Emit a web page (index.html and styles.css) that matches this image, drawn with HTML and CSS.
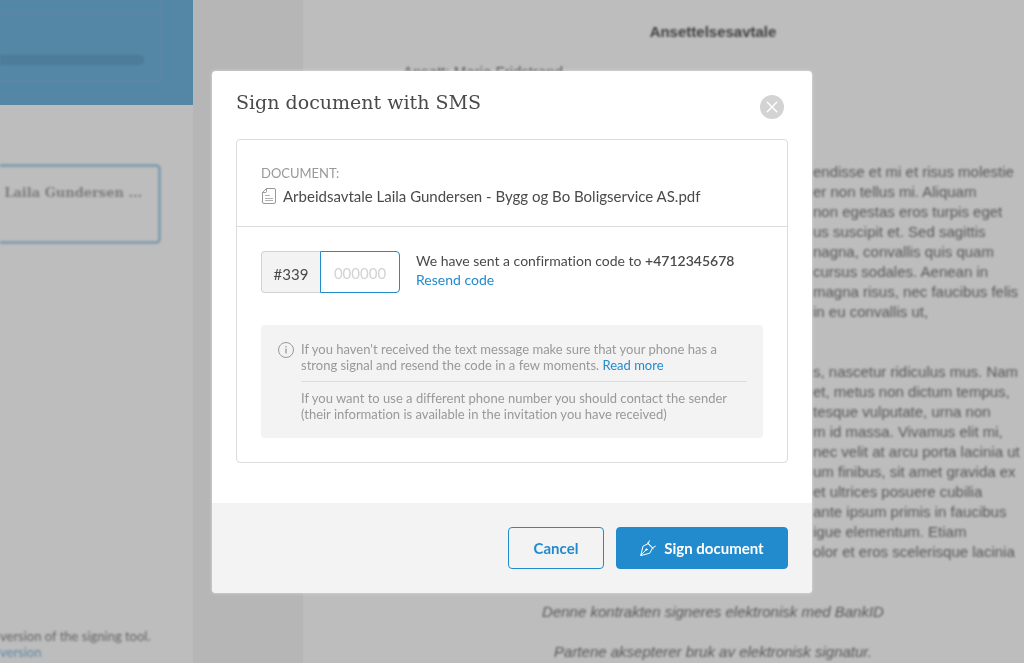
FILE: index.html
```html
<!DOCTYPE html>
<html lang="en">
<head>
    <meta charset="UTF-8">
    <meta name="viewport" content="width=device-width, initial-scale=1.0">
    <title>Sign document with SMS</title>
    <link rel="stylesheet" href="styles.css">
</head>
<body>

    <div class="page" aria-hidden="true">
        <aside class="sidebar">
            <div class="sidebar-top">
                <div class="step"></div>
                <div class="step step-current">
                    <div class="progress"></div>
                </div>
            </div>
            <div class="file-card">- Laila Gundersen ...</div>
            <div class="sidebar-footer">
                <div>version of the signing tool.</div>
                <a href="#" tabindex="-1">version</a>
            </div>
        </aside>

        <main class="document">
            <h2>Ansettelsesavtale</h2>
            <p class="party">Ansatt: Marie Fridstrand</p>
            <p class="copy copy-first">
                <span>endisse et mi et risus molestie</span>
                <span>er non tellus mi. Aliquam</span>
                <span>non egestas eros turpis eget</span>
                <span>us suscipit et. Sed sagittis</span>
                <span>nagna, convallis quis quam</span>
                <span>cursus sodales. Aenean in</span>
                <span>magna risus, nec faucibus felis</span>
                <span>in eu convallis ut,</span>
            </p>
            <p class="copy">
                <span>s, nascetur ridiculus mus. Nam</span>
                <span>et, metus non dictum tempus,</span>
                <span>tesque vulputate, urna non</span>
                <span>m id massa. Vivamus elit mi,</span>
                <span>nec velit at arcu porta lacinia ut</span>
                <span>um finibus, sit amet gravida ex</span>
                <span>et ultrices posuere cubilia</span>
                <span>ante ipsum primis in faucibus</span>
                <span>igue elementum. Etiam</span>
                <span>olor et eros scelerisque lacinia</span>
            </p>
            <p class="note">Denne kontrakten signeres elektronisk med BankID</p>
            <p class="note">Partene aksepterer bruk av elektronisk signatur.</p>
        </main>
    </div>

    <div class="overlay">
        <form class="modal" role="dialog" aria-labelledby="modal-title">
            <header class="modal-header">
                <h1 id="modal-title">Sign document with SMS</h1>
                <button type="button" class="close-button" aria-label="Close">
                    <svg width="24" height="24" viewBox="0 0 24 24" fill="none" stroke="#fff" stroke-width="1.5" stroke-linecap="round">
                        <path d="M7.3 7.3l9.4 9.4M16.7 7.3l-9.4 9.4"/>
                    </svg>
                </button>
            </header>

            <div class="panel">
                <section class="panel-section">
                    <div class="label">DOCUMENT:</div>
                    <div class="file-name">
                        <svg width="16" height="18" viewBox="0 0 16 18" fill="none" stroke="#999">
                            <path d="M5.5 1.5H13a1.5 1.5 0 0 1 1.5 1.5v12a1.5 1.5 0 0 1-1.5 1.5H3A1.5 1.5 0 0 1 1.5 15V5.5z"/>
                            <path d="M5.5 1.5v3a1 1 0 0 1-1 1h-3"/>
                            <path d="M4 8.5h5M4 11.5h8M4 13.5h8" stroke="#b0b0b0"/>
                        </svg>
                        <span>Arbeidsavtale Laila Gundersen - Bygg og Bo Boligservice AS.pdf</span>
                    </div>
                </section>

                <section class="panel-section">
                    <div class="code-row">
                        <div class="code-field">
                            <label for="code">#339</label>
                            <input type="text" id="code" placeholder="000000" maxlength="6" inputmode="numeric">
                        </div>
                        <div class="code-text">
                            We have sent a confirmation code to <strong>+4712345678</strong><br>
                            <a href="#">Resend code</a>
                        </div>
                    </div>

                    <div class="info">
                        <svg width="18" height="18" viewBox="0 0 18 18" fill="none" stroke="#999">
                            <circle cx="9" cy="9" r="7.5"/>
                            <path d="M9 7.5v5M9 5v1.3" stroke-width="1.3"/>
                        </svg>
                        <div class="info-text">
                            <p>If you haven't received the text message make sure that your phone has a<br>
                            strong signal and resend the code in a few moments. <a href="#">Read more</a></p>
                            <p>If you want to use a different phone number you should contact the sender<br>
                            (their information is available in the invitation you have received)</p>
                        </div>
                    </div>
                </section>
            </div>

            <footer class="modal-footer">
                <button type="button" class="button">Cancel</button>
                <button type="submit" class="button button-primary">
                    <svg width="16" height="16" viewBox="0 0 16 16" fill="none" stroke="#fff" stroke-linecap="round" stroke-linejoin="round">
                        <path d="M.8 15.2L3 6.2l5.2-2.6 4.4 4.2-2.7 5.1z"/>
                        <path d="M.8 15.2l5.3-5.4M8.2 3.6L9.3.8M12.6 7.8l2.8-1.6M7.4 2.9l5.9 5.7"/>
                        <circle cx="6.4" cy="9.5" r=".7"/>
                    </svg>
                    <span>Sign document</span>
                </button>
            </footer>
        </form>
    </div>

</body>
</html>
```
FILE: styles.css
```css
:root {
    --accent-color: #228bcd;
    --text-color: #4a4a4a;
    --muted-color: #999;
    --border-color: #dcdcdc;
    --soft-color: #f3f3f3;
}

* {
    box-sizing: border-box;
}

body {
    margin: 0;
    color: var(--text-color);
    font-family: Lato, sans-serif;
    font-size: 14px;
    font-variant-ligatures: none;
    overflow: hidden;
}

h1, h2, p {
    margin: 0;
}

a {
    color: var(--accent-color);
    text-decoration: none;
}

/* page behind the dialog */
.page {
    display: flex;
    height: 100vh;
    overflow: hidden;
    background-color: #f6f6f6;
}

.sidebar {
    display: flex;
    flex-direction: column;
    flex: 0 0 193px;
    min-width: 0;
    background-color: #fff;
}

.file-card,
.sidebar-footer,
.progress,
.document > * {
    filter: blur(1px);
}

.sidebar-top {
    height: 105px;
    padding-right: 32px;
    background-color: #72b6e0;
}

.step {
    height: 14px;
    border-right: 1px solid #7bb6df;
}

.step-current {
    height: 67px;
    padding: 40px 16px 0 0;
    border-top: 1px solid #7bb6df;
    border-bottom: 1px solid #7bb6df;
}

.progress {
    height: 10px;
    border-radius: 0 4px 4px 0;
    background-color: #69a7d0;
}

.file-card {
    display: flex;
    justify-content: flex-end;
    height: 80px;
    margin: 59px 32px 0 0;
    padding: 16px;
    border: 3px solid #b3d6ee;
    border-left: 0;
    border-radius: 0 5px 5px 0;
    color: #aaa;
    font: bold 13px/20px "DejaVu Serif", serif;
    white-space: nowrap;
}

.sidebar-footer {
    margin-top: auto;
    padding-bottom: 3px;
    color: #888;
    font-size: 13px;
    line-height: 16px;
}

.sidebar-footer a {
    color: #82b8df;
}

.document {
    flex: 0 0 820px;
    margin-left: 110px;
    padding: 22px 100px 0;
    background-color: #fff;
    color: #777;
    font: 15px/20px "Liberation Sans", sans-serif;
}

.document h2 {
    color: #555;
    font-size: 15px;
    line-height: 20px;
    text-align: center;
}

.party {
    margin-top: 20px;
}

.copy {
    margin-top: 40px;
    padding-left: 410px;
    white-space: nowrap;
}

.copy-first {
    margin-top: 80px;
}

.copy span {
    display: block;
}

.note {
    margin-top: 20px;
    font-style: italic;
    text-align: center;
}

.copy + .note {
    margin-top: 40px;
}

/* dialog */
.overlay {
    position: fixed;
    inset: 0;
    display: flex;
    align-items: center;
    justify-content: center;
    background-color: rgba(0, 0, 0, 0.26);
}

.modal {
    width: 100%;
    max-width: 600px;
    border-radius: 4px;
    background-color: #fff;
    box-shadow: 0 0 3px rgba(255, 255, 255, 0.5);
    overflow: hidden;
}

.modal-header {
    display: flex;
    align-items: flex-start;
    justify-content: space-between;
    padding: 16px 28px 20px 24px;
}

.modal-header h1 {
    font: 19px/30px "DejaVu Serif", serif;
}

.close-button {
    display: flex;
    margin-top: 8px;
    padding: 0;
    border: 0;
    border-radius: 50%;
    background-color: #d3d3d3;
    cursor: pointer;
}

.panel {
    margin: 0 24px 40px;
    border: 1px solid var(--border-color);
    border-radius: 4px;
}

.panel-section {
    padding: 24px;
}

.panel-section:first-child {
    padding-bottom: 20px;
}

.panel-section + .panel-section {
    border-top: 1px solid var(--border-color);
}

.label {
    color: var(--muted-color);
    font-size: 13px;
    line-height: 18px;
}

.file-name {
    display: flex;
    align-items: center;
    gap: 6px;
    margin-top: 4px;
    font-size: 15px;
    line-height: 20px;
}

.code-row {
    display: flex;
    gap: 16px;
}

.code-field {
    display: flex;
    height: 42px;
}

.code-field label {
    width: 59px;
    padding-top: 2px;
    border: 1px solid #d3d3d3;
    border-right: 0;
    border-radius: 4px 0 0 4px;
    background-color: var(--soft-color);
    font-size: 15px;
    line-height: 40px;
    text-align: center;
}

.code-field input {
    width: 80px;
    padding: 2px 0 0;
    border: 1px solid var(--accent-color);
    border-radius: 0 4px 4px 0;
    color: var(--text-color);
    font: 15px Lato, sans-serif;
    text-align: center;
    outline: none;
}

.code-field input::placeholder {
    color: #d3d3d3;
}

.code-text {
    line-height: 19px;
}

.code-text strong {
    font-weight: 600;
}

.info {
    display: flex;
    gap: 6px;
    margin-top: 32px;
    padding: 16px;
    border-radius: 4px;
    background-color: var(--soft-color);
    color: var(--muted-color);
    font-size: 13px;
    line-height: 16px;
}

.info-text {
    flex: 1;
}

.info-text p + p {
    margin-top: 8px;
    padding-top: 8px;
    border-top: 1px solid var(--border-color);
}

.modal-footer {
    display: flex;
    justify-content: flex-end;
    gap: 12px;
    padding: 24px;
    background-color: var(--soft-color);
}

.button {
    display: flex;
    align-items: center;
    justify-content: center;
    gap: 8px;
    min-width: 96px;
    height: 42px;
    padding: 0 23px;
    border: 1px solid var(--accent-color);
    border-radius: 4px;
    background-color: transparent;
    color: var(--accent-color);
    font: bold 15px Lato, sans-serif;
    cursor: pointer;
}

.button-primary {
    min-width: 172px;
    background-color: var(--accent-color);
    color: #fff;
}
```
